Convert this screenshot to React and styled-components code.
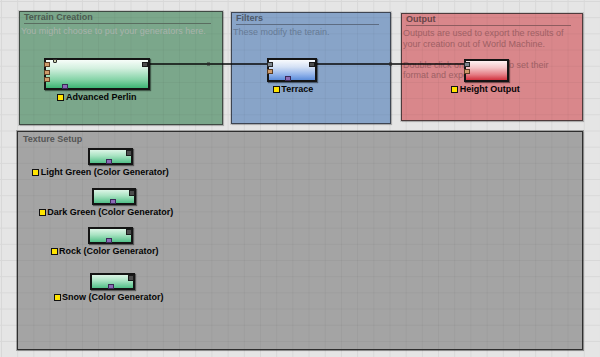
import React from "react";
import styled, { createGlobalStyle } from "styled-components";

const GRID = 16.2;
const gridLines = (c) =>
  `linear-gradient(to right, ${c} 1px, transparent 1px), linear-gradient(to bottom, ${c} 1px, transparent 1px)`;

const Global = createGlobalStyle`
  html, body { margin: 0; padding: 0; background: #e5e5e5; }
  body { font-family: "Liberation Sans", Arial, sans-serif; }
`;

const Canvas = styled.main`
  position: relative;
  width: 600px;
  height: 357px;
  overflow: hidden;
  background-color: #e5e5e5;
  background-image: ${gridLines("#d8d8d8")};
  background-size: ${GRID}px ${GRID}px;
  background-position: 1px 1px;
`;

/* ---------- groups ---------- */

const Group = styled.section`
  position: absolute;
  left: ${(p) => p.$x}px;
  top: ${(p) => p.$y}px;
  width: ${(p) => p.$w}px;
  height: ${(p) => p.$h}px;
  box-sizing: border-box;
  display: flex;
  flex-direction: column;
  background-color: ${(p) => p.$tone.bg};
  background-image: ${gridLines("rgba(0,0,0,0.04)")};
  background-size: ${GRID}px ${GRID}px;
  background-position: ${(p) => -p.$x}px ${(p) => -p.$y}px;
  border: 1px solid ${(p) => p.$tone.edge};
  box-shadow: 0 0 0 1px ${(p) => (p.$plain ? "rgba(0,0,0,0.28)" : "rgba(0,0,0,0.12)")},
    1px 1px 1px rgba(0, 0, 0, 0.15);
  padding-top: ${(p) => (p.$plain ? 2 : 0)}px;
  z-index: 0;
`;

const GroupTitle = styled.h2`
  margin: 0 11px 0 ${(p) => (p.$plain ? 5 : 4)}px;
  padding: 0;
  font: bold 9px/11px "Liberation Sans", Arial, sans-serif;
  color: ${(p) => p.$tone.title};
  border-bottom: ${(p) => (p.$plain ? "none" : `1px solid ${p.$tone.rule}`)};
`;

const GroupText = styled.p`
  margin: 2px 0 0 1px;
  font: 9px/10.5px "Liberation Sans", Arial, sans-serif;
  color: ${(p) => p.$tone.text};
  white-space: pre-line;
`;

/* ---------- nodes ---------- */

const NodeSlot = styled.div`
  position: absolute;
  left: ${(p) => p.$x}px;
  top: ${(p) => p.$y}px;
  width: ${(p) => p.$w}px;
  display: flex;
  flex-direction: column;
  align-items: center;
  z-index: 2;
`;

const NodeBody = styled.div`
  position: relative;
  align-self: stretch;
  height: ${(p) => p.$h}px;
  box-sizing: border-box;
  border: 2px solid #141414;
  background: ${(p) => p.$fill};
  box-shadow: 1px 1px 1px rgba(0, 0, 0, 0.45);
`;

const portColors = {
  inlet: ["#cf9b6a", "#5b3d24"],
  link: ["#7d868e", "#262626"],
  outlet: ["#4c4c4c", "#1a1a1a"],
  mask: ["#8c6bb6", "#3a2856"],
  seed: ["#cdd2ac", "#2e2e2e"],
};

const Port = styled.span`
  position: absolute;
  box-sizing: border-box;
  width: ${(p) => p.$w || 6}px;
  height: ${(p) => p.$h || 5}px;
  background: ${(p) => portColors[p.$kind][0]};
  border: 1px solid ${(p) => portColors[p.$kind][1]};
  border-radius: ${(p) => (p.$kind === "seed" ? 1 : 0)}px;
  ${(p) => (p.$left !== undefined ? `left: ${p.$left}px;` : "")}
  ${(p) => (p.$right !== undefined ? `right: ${p.$right}px;` : "")}
  ${(p) => (p.$top !== undefined ? `top: ${p.$top}px;` : "")}
  ${(p) => (p.$bottom !== undefined ? `bottom: ${p.$bottom}px;` : "")}
`;

const Caption = styled.div`
  display: flex;
  align-items: center;
  gap: 1.5px;
  margin-top: 3px;
  transform: translateX(${(p) => p.$dx || 0}px);
  white-space: nowrap;
  font: bold 9px/9px "Liberation Sans", Arial, sans-serif;
  color: #050505;
`;

const Marker = styled.span`
  width: 7px;
  height: 7px;
  box-sizing: border-box;
  background: #ffe400;
  border: 1px solid #111;
  flex: none;
`;

const Wires = styled.svg`
  position: absolute;
  left: 0;
  top: 0;
  z-index: 1;
  pointer-events: none;
`;

/* ---------- data ---------- */

const tones = {
  green: { bg: "#7ba78b", edge: "#3f4a43", title: "#4b5a50", rule: "#5a6d60", text: "#a9b3ac" },
  blue: { bg: "#88a4c8", edge: "#3e4552", title: "#4e5a6b", rule: "#5d6c82", text: "#667a95" },
  red: { bg: "#d9878b", edge: "#4e3b3c", title: "#684447", rule: "#8e5c5f", text: "#9e6064" },
  gray: { bg: "#a4a4a4", edge: "#2e2e2e", title: "#555555", rule: "#666", text: "#777" },
};

const groups = [
  { id: "terrain", x: 19, y: 11, w: 204, h: 114, tone: tones.green, title: "Terrain Creation", text: "You might choose to put your generators here." },
  { id: "filters", x: 231, y: 12, w: 160, h: 112, tone: tones.blue, title: "Filters", text: "These modify the terain." },
  {
    id: "output",
    x: 401,
    y: 13,
    w: 182,
    h: 108,
    tone: tones.red,
    title: "Output",
    text: "Outputs are used to export the results of\nyour creation out of World Machine.\n\nDouble click on an output to set their\nformat and export.",
  },
  { id: "texture", x: 17, y: 131, w: 566, h: 219, tone: tones.gray, title: "Texture Setup", plain: true },
];

const fills = {
  generator: "linear-gradient(to bottom, #f7fdf9 0%, #d3f0df 30%, #86d4a8 70%, #3db574 100%)",
  color: "linear-gradient(to bottom, #dcf5e6 0%, #a8e3c2 45%, #52c088 100%)",
  filter: "linear-gradient(to bottom, #f8fafd 0%, #d4e1f5 35%, #93b4ea 72%, #5c8ddb 100%)",
  output: "linear-gradient(to bottom, #fff1f2 0%, #f5c6c9 35%, #e57c84 72%, #d2313e 100%)",
};

const nodes = [
  {
    id: "perlin",
    x: 44,
    y: 58,
    w: 106,
    h: 32,
    fill: fills.generator,
    label: "Advanced Perlin",
    ports: [
      { kind: "inlet", left: -2, top: 2 },
      { kind: "inlet", left: -2, top: 9.5 },
      { kind: "inlet", left: -2, top: 17 },
      { kind: "seed", left: 7, top: -1, w: 4, h: 4 },
      { kind: "outlet", right: 0, top: 2 },
      { kind: "mask", left: 16, bottom: -1 },
    ],
  },
  {
    id: "terrace",
    x: 267,
    y: 58,
    w: 50,
    h: 24,
    fill: fills.filter,
    label: "Terrace",
    dx: 1,
    ports: [
      { kind: "link", left: -2, top: 2 },
      { kind: "inlet", left: -2, top: 9 },
      { kind: "outlet", right: 0, top: 2 },
      { kind: "mask", left: 16, bottom: -1 },
    ],
  },
  {
    id: "height",
    x: 464,
    y: 59,
    w: 45,
    h: 23,
    fill: fills.output,
    label: "Height Output",
    dx: -1,
    ports: [
      { kind: "link", left: -2, top: 1 },
      { kind: "inlet", left: -2, top: 8 },
    ],
  },
  { id: "lightgreen", x: 88, y: 148, w: 45, h: 17, fill: fills.color, label: "Light Green (Color Generator)", dx: -10 },
  { id: "darkgreen", x: 92, y: 188, w: 44, h: 17, fill: fills.color, label: "Dark Green (Color Generator)", dx: -8 },
  { id: "rock", x: 88, y: 227, w: 45, h: 17, fill: fills.color, label: "Rock (Color Generator)", dx: -6 },
  { id: "snow", x: 90, y: 273, w: 45, h: 17, fill: fills.color, label: "Snow (Color Generator)", dx: -4 },
].map((n) =>
  n.ports
    ? n
    : {
        ...n,
        ports: [
          { kind: "outlet", right: -1, top: 0, h: 6 },
          { kind: "mask", left: 16, bottom: -1 },
        ],
      }
);

const links = [
  { from: [150, 64], to: [267, 64] },
  { from: [317, 64], to: [464, 64] },
];

export default function App() {
  return (
    <>
      <Global />
      <Canvas>
        {groups.map((g) => (
          <Group key={g.id} $x={g.x} $y={g.y} $w={g.w} $h={g.h} $tone={g.tone} $plain={g.plain}>
            <GroupTitle $tone={g.tone} $plain={g.plain}>
              {g.title}
            </GroupTitle>
            {g.text && <GroupText $tone={g.tone}>{g.text}</GroupText>}
          </Group>
        ))}

        <Wires width="600" height="357" viewBox="0 0 600 357">
          {links.map((l, i) => {
            const mx = (l.from[0] + l.to[0]) / 2;
            const my = (l.from[1] + l.to[1]) / 2;
            return (
              <g key={i}>
                <line x1={l.from[0]} y1={l.from[1]} x2={l.to[0]} y2={l.to[1]} stroke="#0a0a0a" strokeWidth="1.4" />
                <rect x={mx - 1.5} y={my - 1.5} width="3" height="3" fill="#2a2a2a" />
              </g>
            );
          })}
        </Wires>

        {nodes.map((n) => (
          <NodeSlot key={n.id} $x={n.x} $y={n.y} $w={n.w}>
            <NodeBody $h={n.h} $fill={n.fill}>
              {n.ports.map((p, i) => (
                <Port
                  key={i}
                  $kind={p.kind}
                  $left={p.left}
                  $right={p.right}
                  $top={p.top}
                  $bottom={p.bottom}
                  $w={p.w}
                  $h={p.h}
                />
              ))}
            </NodeBody>
            <Caption $dx={n.dx}>
              <Marker />
              {n.label}
            </Caption>
          </NodeSlot>
        ))}
      </Canvas>
    </>
  );
}
